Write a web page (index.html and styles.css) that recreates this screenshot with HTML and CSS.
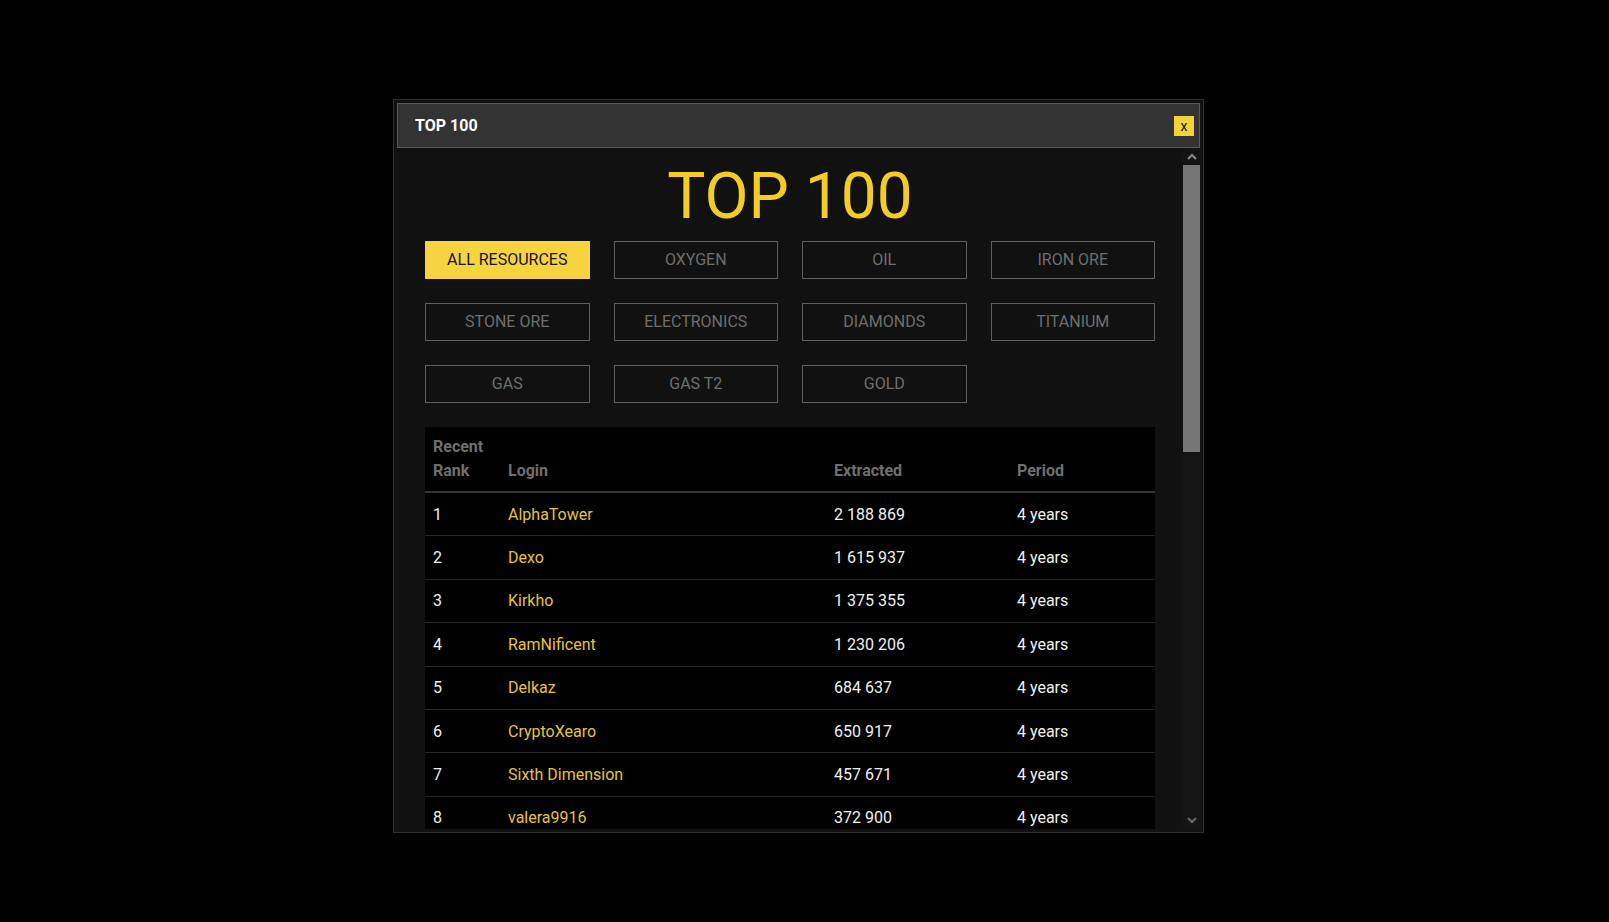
FILE: index.html
```html
<!DOCTYPE html>
<html lang="en">
<head>
    <meta charset="UTF-8">
    <meta name="viewport" content="width=device-width, initial-scale=1.0">
    <title>TOP 100</title>
    <link rel="stylesheet" href="styles.css">
</head>
<body>

    <!-- Dialog Window -->
    <div class="dialog">
        <div class="dialog-header">
            <span class="dialog-title">TOP 100</span>
            <button class="close-btn">x</button>
        </div>

        <div class="dialog-body">
            <div class="content">
                <h1>TOP 100</h1>

                <!-- Resource Filters -->
                <div class="filters">
                    <button class="filter active">All resources</button>
                    <button class="filter">Oxygen</button>
                    <button class="filter">Oil</button>
                    <button class="filter">Iron ore</button>
                    <button class="filter">Stone ore</button>
                    <button class="filter">Electronics</button>
                    <button class="filter">Diamonds</button>
                    <button class="filter">Titanium</button>
                    <button class="filter">Gas</button>
                    <button class="filter">Gas T2</button>
                    <button class="filter">Gold</button>
                </div>

                <!-- Ranking Table -->
                <table class="ranking">
                    <thead>
                        <tr>
                            <th class="col-rank">Recent<br>Rank</th>
                            <th class="col-login">Login</th>
                            <th class="col-extracted">Extracted</th>
                            <th class="col-period">Period</th>
                        </tr>
                    </thead>
                    <tbody>
                        <tr><td>1</td><td class="login">AlphaTower</td><td>2 188 869</td><td>4 years</td></tr>
                        <tr><td>2</td><td class="login">Dexo</td><td>1 615 937</td><td>4 years</td></tr>
                        <tr><td>3</td><td class="login">Kirkho</td><td>1 375 355</td><td>4 years</td></tr>
                        <tr><td>4</td><td class="login">RamNificent</td><td>1 230 206</td><td>4 years</td></tr>
                        <tr><td>5</td><td class="login">Delkaz</td><td>684 637</td><td>4 years</td></tr>
                        <tr><td>6</td><td class="login">CryptoXearo</td><td>650 917</td><td>4 years</td></tr>
                        <tr><td>7</td><td class="login">Sixth Dimension</td><td>457 671</td><td>4 years</td></tr>
                        <tr><td>8</td><td class="login">valera9916</td><td>372 900</td><td>4 years</td></tr>
                    </tbody>
                </table>
            </div>

            <!-- Scrollbar -->
            <div class="scrollbar">
                <div class="scroll-btn">
                    <svg width="10" height="7" viewBox="0 0 10 7"><path d="M1 6 L5 2 L9 6" fill="none" stroke="#8a8a8a" stroke-width="2"/></svg>
                </div>
                <div class="scroll-track">
                    <div class="scroll-thumb"></div>
                </div>
                <div class="scroll-btn">
                    <svg width="10" height="7" viewBox="0 0 10 7"><path d="M1 1 L5 5 L9 1" fill="none" stroke="#6a6a6a" stroke-width="2"/></svg>
                </div>
            </div>
        </div>
    </div>

</body>
</html>
```

FILE: styles.css
```css
body {
    font-family: Roboto, "Liberation Sans", sans-serif;
    margin: 0;
    padding: 99px 0 0 393px;
    background-color: #000;
}

/* Dialog */
.dialog {
    width: 809px;
    border: 1px solid #2e2e2e;
    background-color: #111;
}

.dialog-header {
    height: 43px;
    margin: 3px 3px 0 3px;
    padding: 0 5px 0 17px;
    background-color: #333;
    border: 1px solid #5a5a5a;
    display: flex;
    justify-content: space-between;
    align-items: center;
}

.dialog-title {
    color: #fff;
    font-size: 16px;
    font-weight: bold;
}

.close-btn {
    width: 20px;
    height: 20px;
    padding: 0;
    border: none;
    background-color: #f5d23c;
    color: #111;
    font-family: Roboto, sans-serif;
    font-size: 14px;
    line-height: 20px;
    cursor: pointer;
}

.dialog-body {
    height: 681px;
    margin: 0 3px 3px 3px;
    display: flex;
}

.content {
    flex: 1;
    padding: 10px 28px 0 28px;
    overflow: hidden;
}

h1 {
    margin: 0 0 6px 0;
    color: #f4cc26;
    font-size: 64px;
    font-weight: normal;
    line-height: 77px;
    text-align: center;
}

/* Filters */
.filters {
    display: grid;
    grid-template-columns: repeat(4, 1fr);
    gap: 24px;
}

.filter {
    height: 38px;
    padding: 0 0 1px 0;
    background-color: transparent;
    border: 1px solid #5f5f5f;
    color: #6e6e6e;
    font-family: Roboto, sans-serif;
    font-size: 16px;
    text-transform: uppercase;
    cursor: pointer;
}

.filter.active {
    background-color: #f6d33f;
    border-color: #f6d33f;
    color: #141414;
}

/* Ranking Table */
.ranking {
    width: 730px;
    margin-top: 24px;
    table-layout: fixed;
    border-collapse: collapse;
    background-color: #000;
    font-size: 16px;
    text-align: left;
}

.ranking th {
    padding: 8px;
    line-height: 24px;
    color: #6f6f6f;
    font-weight: bold;
    vertical-align: bottom;
    border-bottom: 2px solid #333;
}

.col-rank { width: 59px; }
.col-login { width: 310px; }
.col-extracted { width: 167px; }
.col-period { width: 130px; }

.ranking td {
    padding: 10.5px 8px 9.5px 8px;
    line-height: 22.4px;
    color: #f0f0f0;
    border-bottom: 1px solid #262626;
}

.ranking td.login {
    color: #e9c42c;
}

/* Scrollbar */
.scrollbar {
    width: 17px;
    display: flex;
    flex-direction: column;
    background-color: #141414;
}

.scroll-btn {
    height: 17px;
    display: flex;
    justify-content: center;
    align-items: center;
}

.scroll-track {
    flex: 1;
}

.scroll-thumb {
    height: 287px;
    background-color: #767676;
}
```
